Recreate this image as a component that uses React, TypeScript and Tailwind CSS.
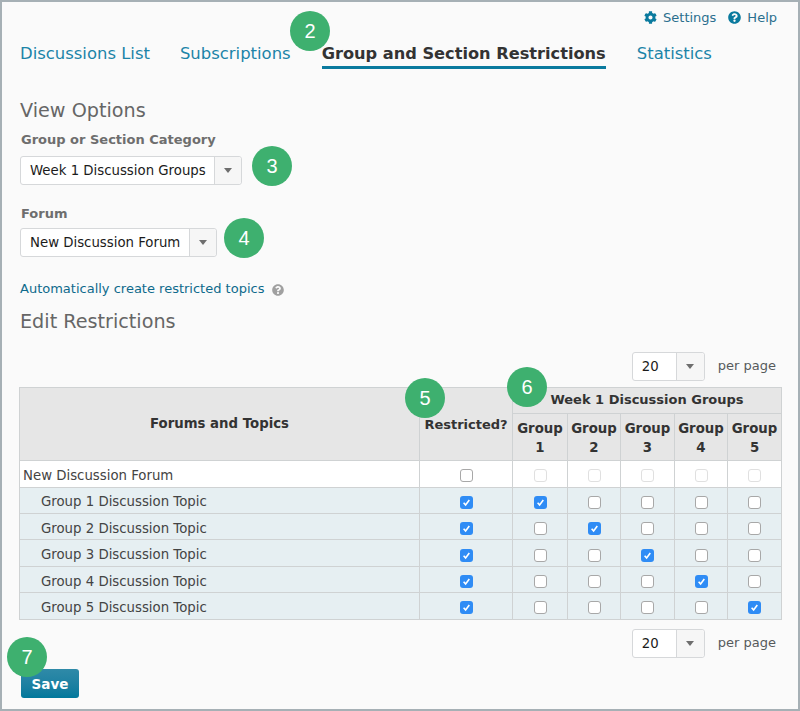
import { FaCog, FaQuestionCircle } from 'react-icons/fa';

const groups = [1, 2, 3, 4, 5];

function Badge({ n, className }: { n: number; className: string }) {
  return (
    <div
      className={`absolute z-10 flex h-10 w-10 items-center justify-center rounded-full bg-[#3eb06f] text-[20px] text-white font-['Liberation_Sans',sans-serif] ${className}`}
    >
      {n}
    </div>
  );
}

function Caret() {
  return <span className="h-0 w-0 border-x-[4px] border-t-[5px] border-x-transparent border-t-[#6e6e6e]" />;
}

function Select({ value, width, arrow = 'w-[27px]' }: { value: string; width: string; arrow?: string }) {
  return (
    <div className={`flex h-[29px] ${width} rounded-[3px] border border-[#d6d8da] bg-white text-[13.3px] text-[#1b1b1b]`}>
      <div className="flex flex-1 items-center whitespace-nowrap pl-[9px] pt-px">{value}</div>
      <div className={`flex ${arrow} items-center justify-center rounded-r-[3px] border-l border-[#d6d8da] bg-[#f6f6f6]`}>
        <Caret />
      </div>
    </div>
  );
}

function Check({ checked, faded }: { checked?: boolean; faded?: boolean }) {
  if (checked) {
    return (
      <span className="inline-flex h-[13px] w-[13px] items-center justify-center rounded-[3px] bg-[#2f8cf5] align-middle">
        <svg viewBox="0 0 13 13" className="h-[13px] w-[13px]">
          <path d="M3.6 6.8 L5.6 8.9 L9.3 4" fill="none" stroke="#fff" strokeWidth="1.6" />
        </svg>
      </span>
    );
  }
  return (
    <span
      className={`inline-block h-[13px] w-[13px] rounded-[3px] border bg-white align-middle ${faded ? 'border-[#e0e0e0]' : 'border-[#a8a8a8]'}`}
    />
  );
}

function PerPage() {
  return (
    <div className="flex items-center justify-end gap-[13px] pr-[6px]">
      <Select value="20" width="w-[73px]" arrow="w-[28px]" />
      <span className="text-[13px] text-[#565a5c]">per page</span>
    </div>
  );
}

export default function App() {
  return (
    <div className="relative h-[711px] w-[800px] overflow-hidden border-2 border-[#a6b0b5] bg-[#fafafa] font-['DejaVu_Sans',sans-serif]">
      <Badge n={2} className="left-[288px] top-[9px]" />
      <Badge n={3} className="left-[250px] top-[144px]" />
      <Badge n={4} className="left-[222px] top-[216px]" />
      <Badge n={5} className="left-[403px] top-[376px]" />
      <Badge n={6} className="left-[505px] top-[365px]" />
      <Badge n={7} className="left-[5px] top-[635px]" />

      <div className="flex justify-end gap-3 pr-[21px] pt-[6px] text-[13px] text-[#2a6f8e]">
        <span className="flex items-center gap-[6px]">
          <FaCog size={13} className="text-[#0a7a9e]" />
          Settings
        </span>
        <span className="flex items-center gap-[6px]">
          <FaQuestionCircle size={13} className="text-[#0a7a9e]" />
          Help
        </span>
      </div>

      <div className="mt-[14px] flex gap-[30px] pl-[18px] text-[16.45px] text-[#1c84a8]">
        <span className="pb-[3px]">Discussions List</span>
        <span className="pb-[3px]">Subscriptions</span>
        <span className="ml-px border-b-[3px] border-[#0a7a9e] text-[16.2px] font-bold text-[#333]">Group and Section Restrictions</span>
        <span className="ml-px pb-[3px]">Statistics</span>
      </div>

      <div className="pl-[18px]">
        <h2 className="mt-[29px] text-[19.2px] leading-[26px] text-[#666]">View Options</h2>
        <div className="ml-px mt-[6px] text-[13px] font-bold text-[#6e6e6e]">Group or Section Category</div>
        <div className="mt-[6px]">
          <Select value="Week 1 Discussion Groups" width="w-[222px]" />
        </div>
        <div className="ml-px mt-[19px] text-[13px] font-bold text-[#6e6e6e]">Forum</div>
        <div className="mt-[5px]">
          <Select value="New Discussion Forum" width="w-[197px]" />
        </div>
        <div className="mt-[22px] flex items-center gap-2 text-[13px] text-[#0e6a8c]">
          Automatically create restricted topics
          <FaQuestionCircle size={12} className="mt-[2px] text-[#a0a0a0]" />
        </div>
        <h2 className="mt-[10px] text-[19.2px] leading-[26px] text-[#666]">Edit Restrictions</h2>
      </div>

      <div className="ml-[17px] w-[763px]">
        <div className="mt-[17px]">
          <PerPage />
        </div>
        <table className="mt-[6px] w-[762px] table-fixed border-collapse text-[13.3px] text-[#444]">
          <colgroup>
            <col className="w-[400px]" />
            <col className="w-[93px]" />
            <col className="w-[55px]" />
            <col className="w-[53px]" />
            <col className="w-[54px]" />
            <col className="w-[53px]" />
            <col className="w-[54px]" />
          </colgroup>
          <thead className="bg-[#e6e6e6] font-bold text-[#333]">
            <tr className="h-[26px]">
              <th rowSpan={2} className="border border-[#cfd2d3]">Forums and Topics</th>
              <th rowSpan={2} className="border border-[#cfd2d3] px-0 pt-[2px] text-[13px]">Restricted?</th>
              <th colSpan={5} className="border border-[#cfd2d3] text-[13px]">Week 1 Discussion Groups</th>
            </tr>
            <tr className="h-[47px]">
              {groups.map((g) => (
                <th key={g} className="border border-[#cfd2d3] px-0 pt-[3px] leading-[19px]">
                  Group
                  <br />
                  {g}
                </th>
              ))}
            </tr>
          </thead>
          <tbody>
            <tr className="h-[27px] bg-white">
              <td className="border border-[#cfd2d3] pl-[3px] pt-[4px]">New Discussion Forum</td>
              <td className="border border-[#cfd2d3] pt-[4px] text-center"><Check /></td>
              {groups.map((g) => (
                <td key={g} className="border border-[#cfd2d3] pt-[4px] text-center"><Check faded /></td>
              ))}
            </tr>
            {groups.map((row) => (
              <tr key={row} className="h-[26.4px] bg-[#e6eff2]">
                <td className="border border-[#cfd2d3] pl-[21px] pt-[4px]">Group {row} Discussion Topic</td>
                <td className="border border-[#cfd2d3] pt-[4px] text-center"><Check checked /></td>
                {groups.map((g) => (
                  <td key={g} className="border border-[#cfd2d3] pt-[4px] text-center"><Check checked={g === row} /></td>
                ))}
              </tr>
            ))}
          </tbody>
        </table>
        <div className="mt-[9px]">
          <PerPage />
        </div>
      </div>

      <button className="ml-[19px] mt-[11px] block h-[29px] w-[58px] rounded-[3px] bg-gradient-to-b from-[#2f8aa8] to-[#00789c] pt-[2px] text-[13.5px] font-bold text-white">
        Save
      </button>
    </div>
  );
}
